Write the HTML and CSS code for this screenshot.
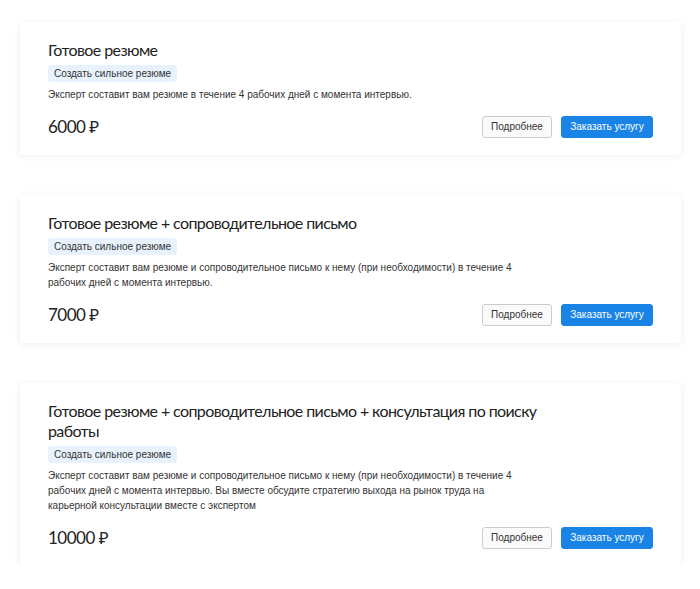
FILE: index.html
```html
<!DOCTYPE html>
<html lang="ru">
<head>
    <meta charset="UTF-8">
    <meta name="viewport" content="width=device-width, initial-scale=1.0">
    <title>Услуги</title>
    <link rel="stylesheet" href="styles.css">
</head>
<body>
    <div class="services">
        <div class="card">
            <h2 class="card-title">Готовое резюме</h2>
            <span class="tag">Создать сильное резюме</span>
            <p class="desc">Эксперт составит вам резюме в течение 4 рабочих дней с момента интервью.</p>
            <div class="card-footer">
                <div class="price">6000 ₽</div>
                <div class="actions">
                    <button class="btn-more">Подробнее</button>
                    <button class="btn-order">Заказать услугу</button>
                </div>
            </div>
        </div>

        <div class="card">
            <h2 class="card-title">Готовое резюме + сопроводительное письмо</h2>
            <span class="tag">Создать сильное резюме</span>
            <p class="desc">Эксперт составит вам резюме и сопроводительное письмо к нему (при необходимости) в течение 4 рабочих дней с момента интервью.</p>
            <div class="card-footer">
                <div class="price">7000 ₽</div>
                <div class="actions">
                    <button class="btn-more">Подробнее</button>
                    <button class="btn-order">Заказать услугу</button>
                </div>
            </div>
        </div>

        <div class="card">
            <h2 class="card-title">Готовое резюме + сопроводительное письмо + консультация по поиску работы</h2>
            <span class="tag">Создать сильное резюме</span>
            <p class="desc">Эксперт составит вам резюме и сопроводительное письмо к нему (при необходимости) в течение 4 рабочих дней с момента интервью. Вы вместе обсудите стратегию выхода на рынок труда на карьерной консультации вместе с экспертом</p>
            <div class="card-footer">
                <div class="price">10000 ₽</div>
                <div class="actions">
                    <button class="btn-more">Подробнее</button>
                    <button class="btn-order">Заказать услугу</button>
                </div>
            </div>
        </div>
    </div>
</body>
</html>
```

FILE: styles.css
```css
body {
    margin: 0;
    padding: 0;
    background-color: #fff;
    color: #333;
    font-family: "Liberation Sans", Arial, sans-serif;
}
.services {
    display: flex;
    flex-direction: column;
    gap: 40px;
    margin: 22px 19px 0 20px;
}
.card {
    background-color: #fff;
    border-radius: 3px;
    box-shadow: 0 1px 8px rgba(0, 0, 0, 0.07);
    padding: 18px 28px 17px 28px;
    display: flex;
    flex-direction: column;
    align-items: flex-start;
}
.card-title {
    margin: 0;
    max-width: 500px;
    font-family: Lato, "Noto Sans", sans-serif;
    font-size: 16px;
    letter-spacing: -0.6px;
    font-weight: 400;
    line-height: 20px;
    color: #222;
}
.tag {
    margin-top: 5px;
    padding: 0 6px;
    height: 17px;
    line-height: 17px;
    font-size: 10px;
    color: #333;
    background-color: #e7f2fd;
    border-radius: 3px;
}
.desc {
    margin: 5px 0 0 0;
    max-width: 480px;
    font-size: 10px;
    line-height: 15px;
    color: #333;
}
.card-footer {
    margin-top: 13px;
    align-self: stretch;
    display: flex;
    justify-content: space-between;
    align-items: center;
}
.price {
    font-family: Lato, "Noto Sans", sans-serif;
    font-size: 17px;
    letter-spacing: -0.5px;
    color: #222;
}
.actions {
    display: flex;
    gap: 9px;
}
.btn-more {
    height: 22px;
    width: 70px;
    padding: 0;
    font-family: "Liberation Sans", Arial, sans-serif;
    font-size: 10px;
    color: #333;
    background-color: #fafafa;
    border: 1px solid #ccc;
    border-radius: 3px;
    cursor: pointer;
}
.btn-order {
    height: 22px;
    width: 92px;
    padding: 0;
    font-family: "Liberation Sans", Arial, sans-serif;
    font-size: 10px;
    color: #fff;
    background-color: #1a84e6;
    border: 1px solid #1a84e6;
    border-radius: 3px;
    cursor: pointer;
}
.btn-order:hover {
    background-color: #136fc4;
}
```
